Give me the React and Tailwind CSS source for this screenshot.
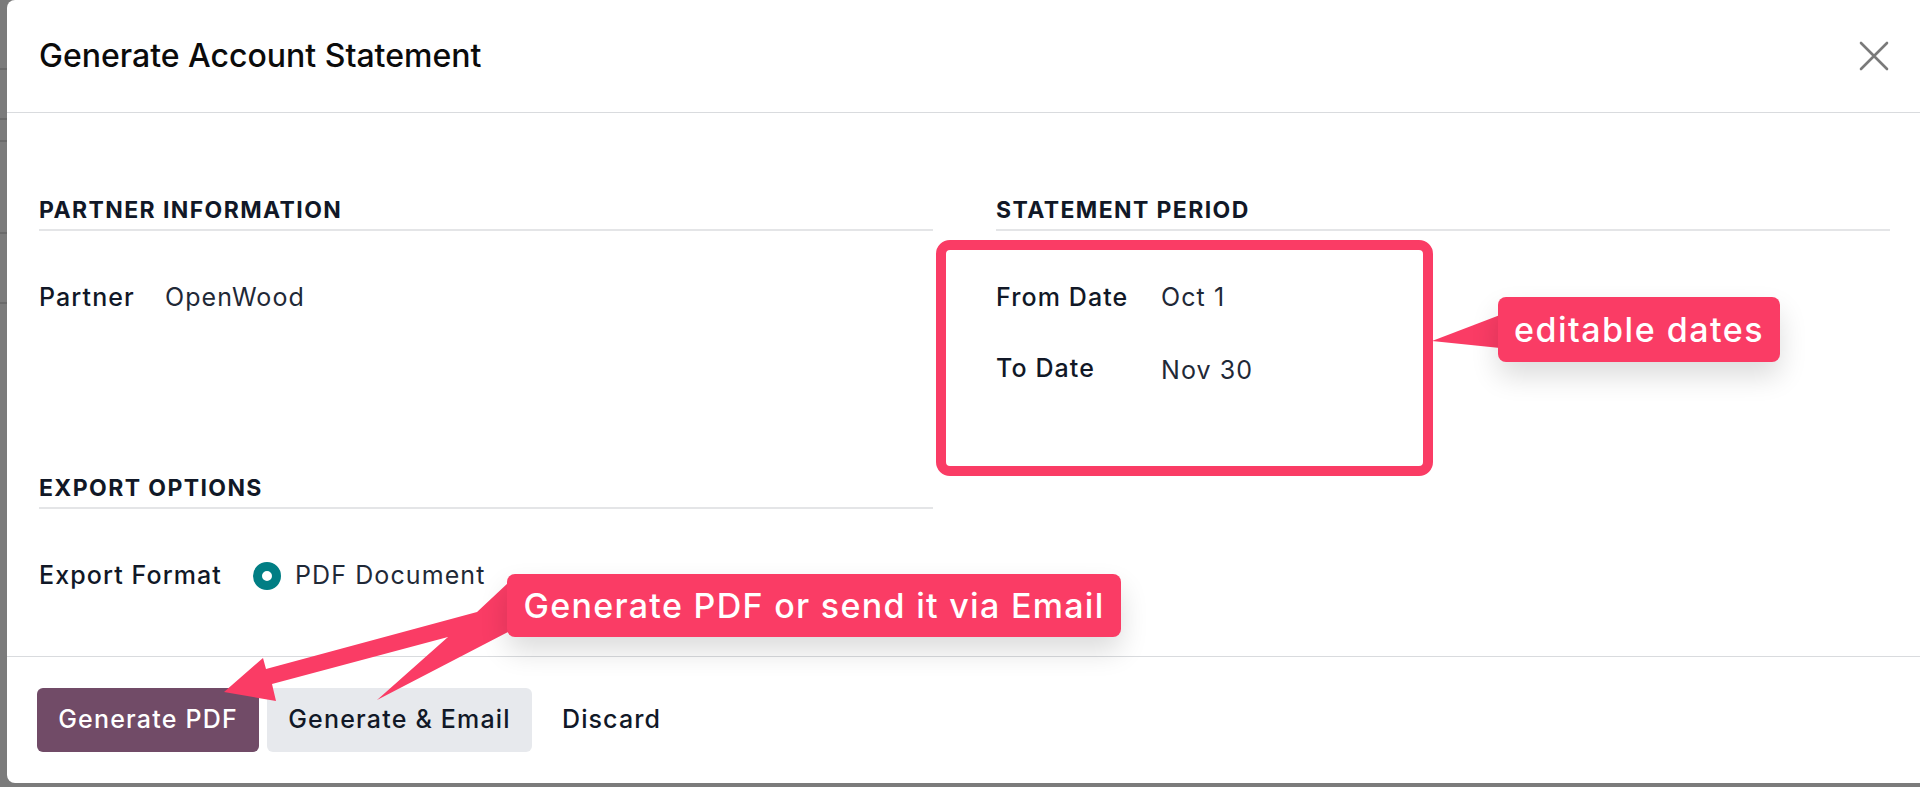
import React from 'react';

const font = { fontFamily: 'Inter, "Noto Sans", sans-serif' };

function SectionTitle({ children }) {
  return (
    <div className="border-b-2 border-[#e4e5e7] pb-[5px] text-[23px] leading-[28px] font-bold tracking-[1.4px] text-[#111827] uppercase">
      {children}
    </div>
  );
}

function Row({ label, labelWidth, children }) {
  return (
    <div className="flex items-center h-[32px]">
      <div className={`${labelWidth} text-[25px] tracking-[1.1px] font-medium text-[#111827]`}>{label}</div>
      <div className="text-[25px] tracking-[1.1px] text-[#1f2937] flex items-center">{children}</div>
    </div>
  );
}

export default function App() {
  return (
    <div className="relative w-[1920px] h-[787px] bg-[#7b7b7b] overflow-hidden flex" style={font}>
      {/* page behind the modal */}
      <div className="w-[7px] h-full flex flex-col">
        <div className="h-[68px]" />
        <div className="h-[2px] bg-[#6a6a6a]" />
        <div className="h-[48px]" />
        <div className="h-[2px] bg-[#6a6a6a]" />
        <div className="h-[20px]" />
        <div className="h-[2px] bg-[#6a6a6a]" />
        <div className="h-[90px]" />
        <div className="h-[2px] bg-[#6a6a6a]" />
        <div className="h-[68px]" />
        <div className="h-[2px] bg-[#6a6a6a]" />
      </div>

      <div className="flex-1 h-[783px] bg-white rounded-l-[8px] flex flex-col">
        {/* header */}
        <div className="h-[113px] shrink-0 border-b border-[#d9dbde] flex items-center justify-between pl-[32px] pr-[30px]">
          <h1 className="text-[32px] font-medium text-[#0b0b0b]">Generate Account Statement</h1>
          <svg width="30" height="30" viewBox="0 0 30 30" className="mr-[1px]">
            <path d="M2 2 L28 28 M28 2 L2 28" stroke="#7a7a7a" strokeWidth="2.6" strokeLinecap="round" />
          </svg>
        </div>

        {/* body */}
        <div className="flex-1 pl-[32px] pr-[30px] pt-[83px]">
          <div className="grid grid-cols-2 gap-x-[63px] gap-y-[89px]">
            <div>
              <SectionTitle>Partner Information</SectionTitle>
              <div className="mt-[51px]">
                <Row label="Partner" labelWidth="w-[126px]">OpenWood</Row>
              </div>
            </div>
            <div>
              <SectionTitle>Statement Period</SectionTitle>
              <div className="mt-[51px] flex flex-col gap-[39px]">
                <Row label="From Date" labelWidth="w-[165px]">Oct 1</Row>
                <Row label="To Date" labelWidth="w-[165px]"><span className="mt-[4px]">Nov 30</span></Row>
              </div>
            </div>
            <div>
              <SectionTitle>Export Options</SectionTitle>
              <div className="mt-[51px]">
                <Row label="Export Format" labelWidth="w-[214px]">
                  <span className="w-[28px] h-[28px] rounded-full border-[9px] border-[#017e84] bg-white mr-[14px]" />
                  PDF Document
                </Row>
              </div>
            </div>
          </div>
        </div>

        {/* footer */}
        <div className="h-[127px] shrink-0 border-t border-[#d9dbde] flex items-center gap-[8px] pl-[30px]">
          <button className="h-[64px] w-[222px] rounded-[6px] bg-[#714b67] text-white text-[25px] tracking-[1.2px] font-medium">
            Generate PDF
          </button>
          <button className="h-[64px] w-[265px] rounded-[6px] bg-[#e7e9ed] text-[#111827] text-[25px] tracking-[1.2px] font-medium">
            Generate &amp; Email
          </button>
          <button className="h-[64px] px-[22px] text-[#111827] text-[25px] tracking-[1.1px] font-medium">Discard</button>
        </div>
      </div>

      {/* annotation: pink frame */}
      <div className="absolute left-[936px] top-[240px] w-[497px] h-[236px] border-[10px] border-[#fa3c65] rounded-[14px]" />

      {/* annotation arrows */}
      <svg className="absolute left-0 top-0 pointer-events-none" width="1920" height="787">
        <polygon points="1432,341 1500,315 1500,348" fill="#fa3c65" />
        <polygon
          points="508,583 477,612 266,669 263,658 224,692 276,701 272,684 448,637 377,700 508,632"
          fill="#fa3c65"
        />
      </svg>
      <div className="absolute left-[1498px] top-[297px] w-[282px] h-[65px] rounded-[8px] bg-[#fa3c65] text-white text-[34px] tracking-[1.5px] font-medium flex items-center justify-center shadow-[0_14px_28px_rgba(0,0,0,0.14)]">
        editable dates
      </div>
      <div className="absolute left-[507px] top-[574px] w-[614px] h-[63px] rounded-[8px] bg-[#fa3c65] text-white text-[34px] tracking-[1.3px] font-medium flex items-center justify-center shadow-[0_14px_28px_rgba(0,0,0,0.14)]">
        Generate PDF or send it via Email
      </div>
    </div>
  );
}
